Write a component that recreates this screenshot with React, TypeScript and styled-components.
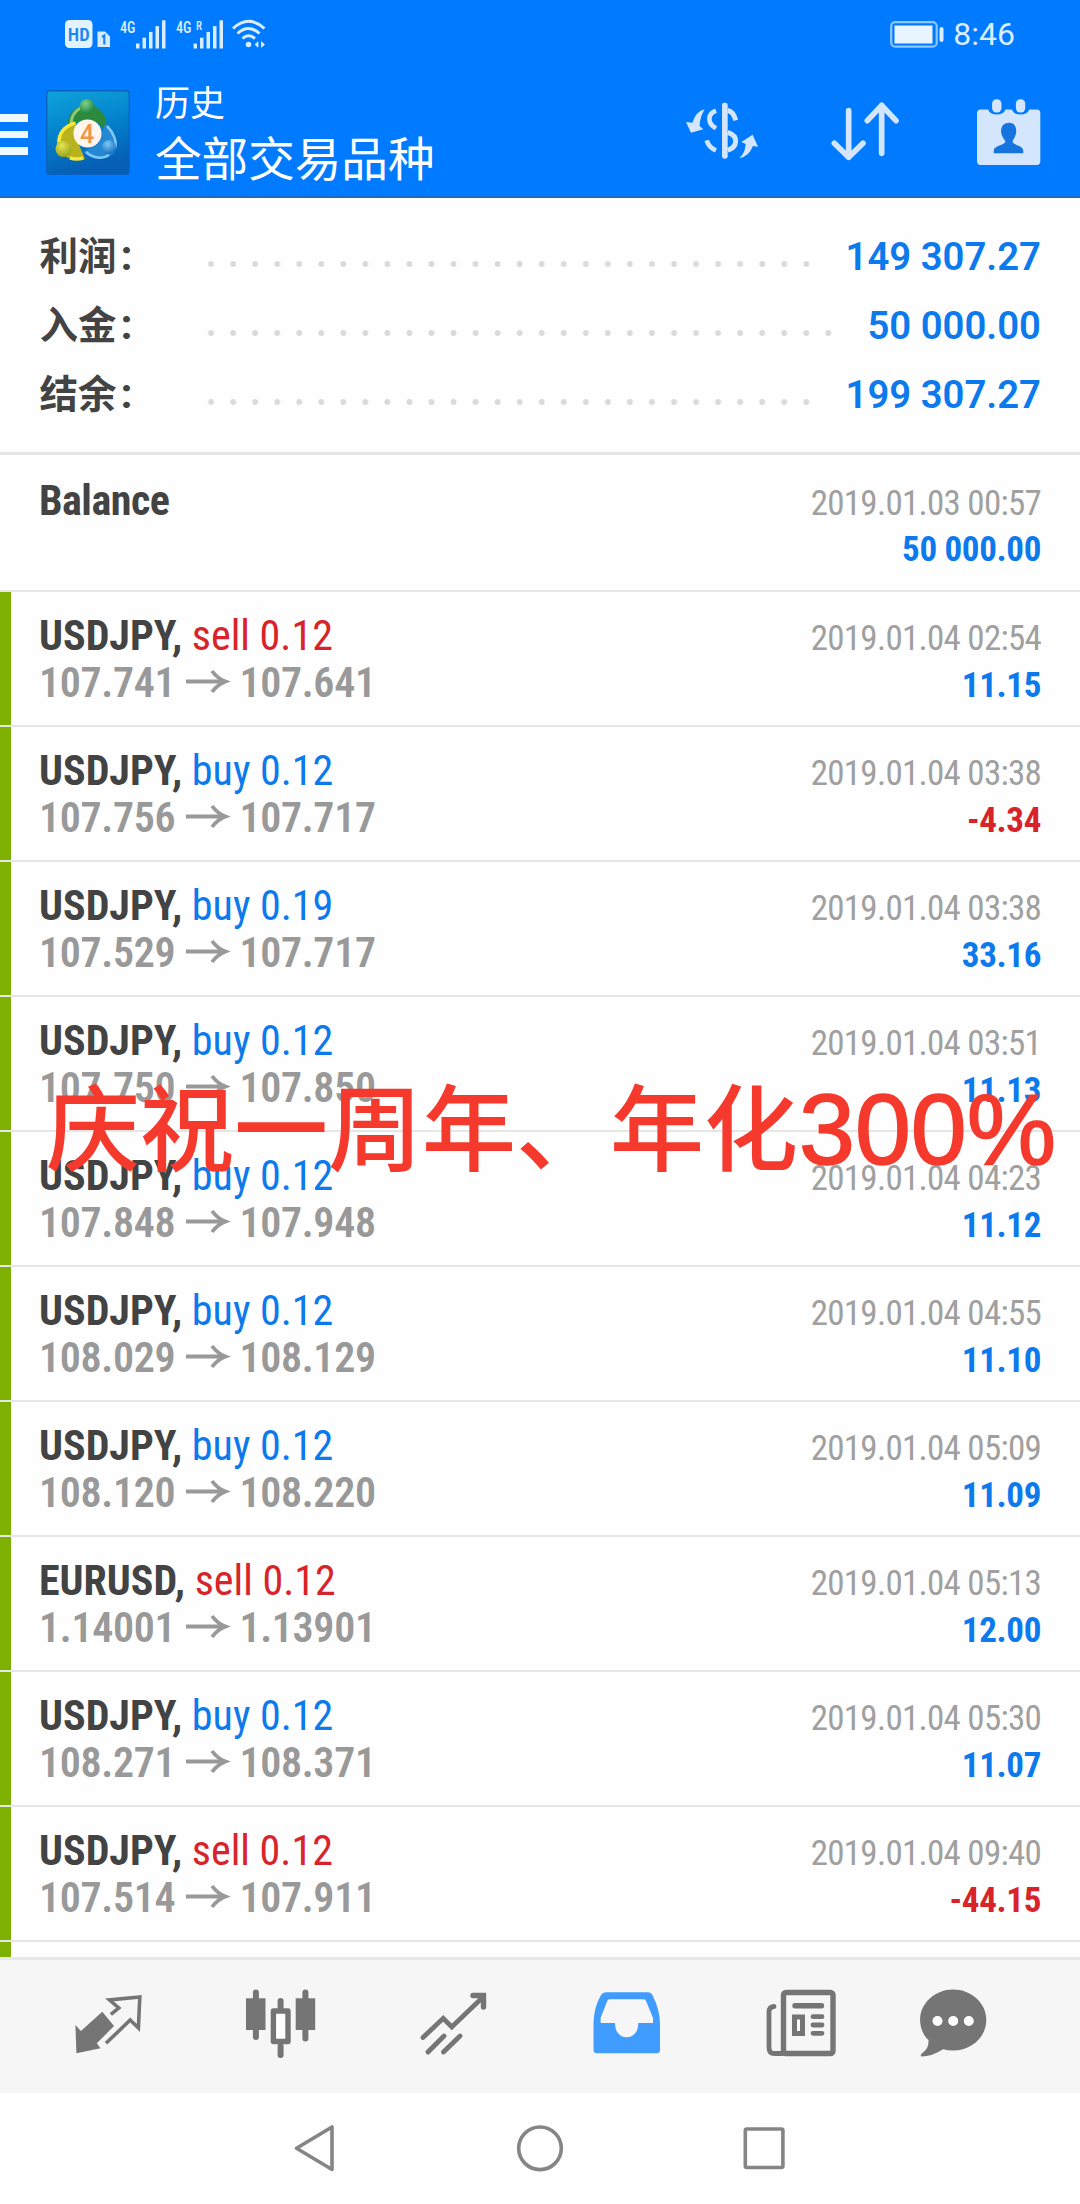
import React from 'react';
import styled, { createGlobalStyle } from 'styled-components';

const BLUE = '#0c7aec';
const RED = '#d8232a';

const Global = createGlobalStyle`
  * { box-sizing: border-box; }
  body { margin: 0; background: #fefefe; }
  svg { display: block; flex: none; overflow: visible; }
`;

const Screen = styled.div`
  position: relative;
  width: 1080px;
  height: 2204px;
  overflow: hidden;
  display: flex;
  flex-direction: column;
  background: #fefefe;
  font-family: Roboto, 'Noto Sans CJK SC', sans-serif;
`;

const Top = styled.header`
  height: 198px;
  flex: none;
  background: #007aff;
  border-bottom: 2px solid #1f6bc4;
  color: #fff;
`;

const StatusBar = styled.div`
  display: flex;
  justify-content: space-between;
  height: 68px;
  padding: 0 65px;
`;

const StatusGroup = styled.div<{ $gap: number }>`
  display: flex;
  align-items: center;
  gap: ${(p) => p.$gap}px;
`;

const Clock = styled.span`
  font-size: 32px;
  line-height: 68px;
  color: #d9edff;
`;

const AppBar = styled.div`
  display: flex;
  align-items: flex-start;
  height: 128px;
`;

const MenuButton = styled.div`
  display: flex;
  flex-direction: column;
  gap: 9px;
  width: 28px;
  padding-top: 46px;
`;

const MenuLine = styled.span`
  height: 7.5px;
  background: #f0f8ff;
`;

const LogoBox = styled.div`
  width: 84px;
  height: 85px;
  margin: 22px 0 0 18px;
`;

const Titles = styled.div`
  display: flex;
  flex-direction: column;
  margin: 9px auto 0 25px;
  font-family: 'Noto Sans CJK SC', sans-serif;
  color: #fff;
`;

const Subtitle = styled.div`
  font-size: 35px;
  line-height: 48px;
`;

const Title = styled.div`
  font-size: 46.6px;
  line-height: 62px;
`;

const Actions = styled.div`
  display: flex;
  align-items: flex-start;
  padding: 32px 38px 0 0;
`;

const Action = styled.div<{ $gap: number; $lift?: number }>`
  margin-left: ${(p) => p.$gap}px;
  margin-top: -${(p) => p.$lift || 0}px;
`;

const Summary = styled.section`
  flex: none;
  height: 257px;
  padding: 24px 39px 0 39.5px;
  border-bottom: 3px solid #e6e6e6;
`;

const SummaryRow = styled.div`
  display: flex;
  align-items: baseline;
  height: 69px;
  line-height: 69px;
  font-size: 38px;
`;

const SummaryLabel = styled.span`
  width: 160.5px;
  font-size: 38.5px;
  font-weight: 700;
  color: #434343;
`;

const Colon = styled.span`
  margin-left: 4px;
  font-size: 43px;
  line-height: 1;
`;

const Dots = styled.span<{ $count: number }>`
  width: ${(p) => p.$count * 22.06}px;
  height: 10px;
  margin-right: auto;
  align-self: flex-start;
  margin-top: 36.5px;
  background: radial-gradient(circle at center, #dadada 2.5px, transparent 3.4px) 0 0 / 22.06px 10px repeat-x;
`;

const SummaryValue = styled.span`
  font-weight: 600;
  font-size: 38.3px;
  color: ${BLUE};
`;

const List = styled.main`
  flex: none;
  height: 1502px;
  overflow: hidden;
  font-family: 'Roboto Condensed', Roboto, sans-serif;
`;

const Row = styled.article<{ $trade?: boolean }>`
  height: ${(p) => (p.$trade ? 135 : 137)}px;
  padding: ${(p) => (p.$trade ? 19.5 : 22)}px 39px 0 ${(p) => (p.$trade ? 28 : 39)}px;
  border-left: ${(p) => (p.$trade ? '11px solid #7db000' : '0 solid')};
`;

const Separated = styled.div`
  border-bottom: 2px solid #e6e6e6;
  & > article { height: 133px; }
  &:first-child > article { height: 135px; }
`;

const Line = styled.div`
  display: flex;
  align-items: baseline;
  justify-content: space-between;
  height: 47px;
  line-height: 47px;
`;

const Symbol = styled.span<{ $tight?: boolean }>`
  font-size: 42px;
  font-weight: 700;
  letter-spacing: ${(p) => (p.$tight ? '-0.5px' : '0')};
  color: #434343;
  white-space: pre;
`;

const Deal = styled.span<{ $sell: boolean }>`
  font-weight: 400;
  color: ${(p) => (p.$sell ? RED : BLUE)};
`;

const Prices = styled.span`
  display: inline-flex;
  align-items: baseline;
  font-size: 42px;
  font-weight: 600;
  letter-spacing: -0.35px;
  color: #999;
`;

const ArrowIcon = styled.svg`
  margin: 0 12.5px 0 10.7px;
  transform: translateY(-4px);
`;

const Time = styled.span`
  font-size: 35px;
  letter-spacing: -0.73px;
  color: #a0a0a0;
`;

const Profit = styled.span<{ $loss?: boolean; $drop?: boolean }>`
  margin-left: auto;
  padding-top: ${(p) => (p.$drop ? 2 : 0)}px;
  font-size: 35px;
  font-weight: 700;
  letter-spacing: -0.35px;
  color: ${(p) => (p.$loss ? RED : BLUE)};
`;

const TabBar = styled.nav`
  display: flex;
  flex: none;
  height: 136px;
  padding-left: 22px;
  border-top: 3px solid #e8e8e8;
  background: #f6f6f6;
  color: #757575;
`;

const NavBar = styled.div`
  display: flex;
  flex: none;
  justify-content: center;
  height: 111px;
  color: #858585;
`;

const Banner = styled.div`
  position: absolute;
  left: 46px;
  top: 1073px;
  font-family: 'Noto Sans CJK SC', sans-serif;
  font-size: 94px;
  font-weight: 500;
  line-height: 100px;
  white-space: nowrap;
  color: #f5392d;
`;

const BannerNumber = styled.span`
  margin-left: 1px;
  font-family: 'Liberation Sans', sans-serif;
  font-size: 100.5px;
  font-weight: 400;
  line-height: 1;
  -webkit-text-stroke: 1.6px #f5392d;
`;

const HdBadge = () => (
  <svg width="45" height="28" viewBox="0 0 45 28">
    <rect width="27.5" height="28" rx="4.5" fill="#e3f2ff" />
    <text x="13.8" y="20.5" textAnchor="middle" fontFamily="Roboto Condensed" fontWeight="600" fontSize="18.5" textLength="22" fill="#1c86f5">HD</text>
    <path d="M32.5 11.5 H40 L45 16.5 V27 H32.5z" fill="#d5ebff" />
    <path d="M37 17 L39.3 15.5 V24.5" fill="none" stroke="#1c86f5" strokeWidth="2.2" />
  </svg>
);

const Signal = ({ roaming }: { roaming?: boolean }) => (
  <svg width="46" height="30" viewBox="0 0 46 30" fill="#d9edff">
    <text x="0" y="13.5" fontFamily="Roboto Condensed" fontWeight="500" fontSize="17" textLength="15.5" lengthAdjust="spacingAndGlyphs">4G</text>
    {roaming && <text x="20" y="10.5" fontFamily="Roboto Condensed" fontWeight="500" fontSize="13" textLength="6" lengthAdjust="spacingAndGlyphs">R</text>}
    {[0, 1, 2, 3, 4].map((i) => (
      <rect key={i} x={(roaming ? 17.5 : 16) + i * 6.5} y={24.5 - i * 5.8} width="3.5" height={5 + i * 5.8} />
    ))}
  </svg>
);

const Wifi = () => (
  <svg width="34" height="30" viewBox="0 0 34 30" fill="none" stroke="#d9edff" strokeWidth="3">
    <path d="M1 9.5 Q16.5 -5 32.5 9.5" />
    <path d="M5.5 14.5 Q16.5 4.5 27.5 14.5" />
    <path d="M10.5 19.5 Q16.5 14 23 19.5" />
    <circle cx="16.5" cy="25.5" r="2.8" fill="#d9edff" stroke="none" />
    <path d="M26 22.8 L23 25.5 L26 28.2z M29.5 22.8 L32.5 25.5 L29.5 28.2z" fill="#d9edff" stroke="#d9edff" strokeWidth="0.8" />
  </svg>
);

const Battery = () => (
  <svg width="55" height="27" viewBox="0 0 55 27">
    <rect x="1.2" y="1.2" width="45.5" height="24.5" rx="4" fill="none" stroke="#8fc5ff" strokeWidth="2.2" />
    <rect x="4.5" y="4.5" width="38" height="18" fill="#e8f4ff" />
    <rect x="49.5" y="6" width="4" height="15" rx="2" fill="#d9edff" />
  </svg>
);

const Logo = () => (
  <svg width="84" height="85" viewBox="0 0 84 85">
    <defs>
      <linearGradient id="tile" x1="0" y1="0" x2="0.25" y2="1">
        <stop offset="0" stopColor="#10a3dc" />
        <stop offset="0.5" stopColor="#0383cd" />
        <stop offset="1" stopColor="#065fb4" />
      </linearGradient>
      <radialGradient id="green" cx="0.4" cy="0.3" r="0.8"><stop offset="0" stopColor="#7fd08a" /><stop offset="1" stopColor="#0e7a35" /></radialGradient>
      <radialGradient id="yellow" cx="0.4" cy="0.3" r="0.8"><stop offset="0" stopColor="#e6e455" /><stop offset="1" stopColor="#8f9d12" /></radialGradient>
      <radialGradient id="azure" cx="0.4" cy="0.3" r="0.8"><stop offset="0" stopColor="#7cc8f7" /><stop offset="1" stopColor="#0a67b8" /></radialGradient>
    </defs>
    <rect x="0.7" y="0.7" width="82.6" height="83.6" rx="3" fill="url(#tile)" stroke="#0b62c0" strokeWidth="1.4" />
    <path d="M22 38 C20 24 30 15 41 15 C53 15 63 26 60 40 L49 31 H34 Z" fill="#2c8a3c" />
    <path d="M25 33 C26 23 33 17 39 17" fill="none" stroke="#8fca7a" strokeWidth="3" />
    <path d="M30 32 C20 34 10 44 11 55 C14 67 27 72 39 69 L31 50 Z" fill="#b9b41d" />
    <path d="M29 33 C19 36 13 43 13 52 M24 68 Q31 70 37 68" fill="none" stroke="#f5e83a" strokeWidth="3.5" />
    <path d="M59 34 C69 42 73 54 68 63 C60 71 46 71 37 62 L52 54 Z" fill="#2389d5" />
    <path d="M61 36 C68 43 71 52 69 58 M40 62 C48 69 57 69 63 65" fill="none" stroke="#83c9f7" strokeWidth="2.5" />
    <circle cx="41" cy="16.5" r="7.5" fill="url(#green)" />
    <circle cx="17.5" cy="59" r="8" fill="url(#yellow)" />
    <circle cx="63" cy="57" r="7" fill="url(#azure)" />
    <circle cx="41.5" cy="43.5" r="14" fill="#fff5ee" />
    <text x="41" y="52.5" textAnchor="middle" fontFamily="Roboto" fontWeight="500" fontSize="25" fill="#f0954a">4</text>
  </svg>
);

const CurrencyIcon = () => (
  <svg width="76" height="62" viewBox="72 60 228 186" fill="#d3e6fd">
    <rect x="186" y="68" width="17" height="168" rx="7" />
    <path d="M168 92 Q147 101 148 118 Q149 134 168 145 M140 181 Q146 202 168 211" fill="none" stroke="#d3e6fd" strokeWidth="14" />
    <path d="M203 91 Q221 95 227 121 M203 157 Q229 166 227 185 Q225 204 203 210" fill="none" stroke="#d3e6fd" strokeWidth="15" />
    <path d="M134 88 Q108 94 97 128 L78 126 L93 158 L130 148 L119 138 Q119 112 134 88z" />
    <path d="M238 235 Q256 218 257 192 L244 186 L278 164 L294 200 L279 198 Q266 230 238 235z" />
  </svg>
);

const SortIcon = () => (
  <svg width="70" height="62" viewBox="510 60 210 186" fill="none" stroke="#d3e6fd" strokeWidth="17" strokeLinecap="round" strokeLinejoin="round">
    <path d="M566 92 V232 M523 190 L566 232 L609 190" />
    <path d="M665 220 V76 M622 122 L665 76 L708 122" />
  </svg>
);

const CalendarIcon = () => (
  <svg width="67" height="69" viewBox="945 52 200 206">
    <path d="M962 86 H984 Q990 101 1010 101 Q1030 101 1036 86 H1055 Q1061 101 1081 101 Q1101 101 1107 86 H1129 Q1140 86 1140 97 V241 Q1140 252 1129 252 H962 Q951 252 951 241 V97 Q951 86 962 86z" fill="#d3e6fd" />
    <rect x="996" y="56" width="28" height="39" rx="13" fill="#d3e6fd" />
    <rect x="1067" y="56" width="28" height="39" rx="13" fill="#d3e6fd" />
    <path d="M1046 126 C1062 126 1069 138 1068 153 C1067 167 1060 174 1057 182 C1058 194 1089 193 1089 209 V217 H1001 V209 C1001 193 1034 194 1036 182 C1032 174 1024 167 1023 153 C1022 138 1030 126 1046 126z" fill="#1574e0" />
  </svg>
);

const Arrow = () => (
  <ArrowIcon width="41" height="23" viewBox="0 0 41 23" fill="none" stroke="#999" strokeWidth="3.8">
    <path d="M0 11.5 H38 M26 1 Q31.5 8.5 39.5 11.5 Q31.5 14.5 26 22" />
  </ArrowIcon>
);

type TabIconProps = { x: number; w: number; children: React.ReactNode };
const TabIcon = ({ x, w, children }: TabIconProps) => (
  <svg width={w} height="132" viewBox={`${x} 1960 ${w} 132`} fill="none" stroke="currentColor" strokeWidth="4.8" strokeLinecap="round">
    {children}
  </svg>
);

type Trade = [symbol: string, deal: string, open: string, close: string, time: string, profit: string];
const trades: Trade[] = [
  ['USDJPY', 'sell 0.12', '107.741', '107.641', '2019.01.04 02:54', '11.15'],
  ['USDJPY', 'buy 0.12', '107.756', '107.717', '2019.01.04 03:38', '-4.34'],
  ['USDJPY', 'buy 0.19', '107.529', '107.717', '2019.01.04 03:38', '33.16'],
  ['USDJPY', 'buy 0.12', '107.750', '107.850', '2019.01.04 03:51', '11.13'],
  ['USDJPY', 'buy 0.12', '107.848', '107.948', '2019.01.04 04:23', '11.12'],
  ['USDJPY', 'buy 0.12', '108.029', '108.129', '2019.01.04 04:55', '11.10'],
  ['USDJPY', 'buy 0.12', '108.120', '108.220', '2019.01.04 05:09', '11.09'],
  ['EURUSD', 'sell 0.12', '1.14001', '1.13901', '2019.01.04 05:13', '12.00'],
  ['USDJPY', 'buy 0.12', '108.271', '108.371', '2019.01.04 05:30', '11.07'],
  ['USDJPY', 'sell 0.12', '107.514', '107.911', '2019.01.04 09:40', '-44.15'],
];

const totals: [string, number, string][] = [
  ['利润', 28, '149 307.27'],
  ['入金', 29, '50 000.00'],
  ['结余', 28, '199 307.27'],
];

export default function App() {
  return (
    <Screen>
      <Global />
      <Top>
        <StatusBar>
          <StatusGroup $gap={10}>
            <HdBadge />
            <Signal />
            <Signal roaming />
            <Wifi />
          </StatusGroup>
          <StatusGroup $gap={8}>
            <Battery />
            <Clock>8:46</Clock>
          </StatusGroup>
        </StatusBar>
        <AppBar>
          <MenuButton><MenuLine /><MenuLine /><MenuLine /></MenuButton>
          <LogoBox><Logo /></LogoBox>
          <Titles>
            <Subtitle>历史</Subtitle>
            <Title>全部交易品种</Title>
          </Titles>
          <Actions>
            <Action $gap={0}><CurrencyIcon /></Action>
            <Action $gap={70}><SortIcon /></Action>
            <Action $gap={75} $lift={2.5}><CalendarIcon /></Action>
          </Actions>
        </AppBar>
      </Top>

      <Summary>
        {totals.map(([label, count, value]) => (
          <SummaryRow key={label}>
            <SummaryLabel>{label}<Colon>:</Colon></SummaryLabel>
            <Dots $count={count} />
            <SummaryValue>{value}</SummaryValue>
          </SummaryRow>
        ))}
      </Summary>

      <List>
        <Separated>
          <Row>
            <Line><Symbol $tight>Balance</Symbol><Time>2019.01.03 00:57</Time></Line>
            <Line><Profit $drop>50 000.00</Profit></Line>
          </Row>
        </Separated>
        {trades.map(([symbol, deal, open, close, time, profit]) => (
          <Separated key={time + open}>
            <Row $trade>
              <Line>
                <Symbol>{symbol}, <Deal $sell={deal.startsWith('sell')}>{deal}</Deal></Symbol>
                <Time>{time}</Time>
              </Line>
              <Line>
                <Prices>{open}<Arrow />{close}</Prices>
                <Profit $loss={profit.startsWith('-')}>{profit}</Profit>
              </Line>
            </Row>
          </Separated>
        ))}
        <Row $trade />
      </List>

      <TabBar>
        <TabIcon x={22} w={173}>
          <path d="M75.4 2025 L80.9 2031 L102.3 2011.7 L114 2026 L96.8 2043.3 L100.5 2048.3 L76.4 2053.3z" fill="currentColor" stroke="none" />
          <path d="M110.9 2014.3 L118.8 2008 L109.5 2000 L139.8 1997 L138.4 2028 L130.2 2020 L106 2043.3" strokeWidth="3.6" strokeLinecap="butt" />
        </TabIcon>
        <TabIcon x={195} w={173}>
          <path d="M255.9 1992.5 V2037 M305.4 1992.5 V2038.5 M280.6 2001 V2008 M280.6 2046 V2055" strokeWidth="6" />
          <rect x="246" y="1998.3" width="19.5" height="31.7" fill="currentColor" stroke="none" />
          <rect x="295.7" y="1998.3" width="19.5" height="31.7" fill="currentColor" stroke="none" />
          <rect x="273.4" y="2011" width="14.6" height="30.5" strokeWidth="5.4" fill="#fff" strokeLinejoin="round" />
        </TabIcon>
        <TabIcon x={368} w={173}>
          <path d="M423 2037.5 L443.2 2018.3 L451.8 2027 L483 1997 M428 2052 L444 2036 M443.5 2052 L460 2036" />
          <path d="M473 1995.5 H483.5 V2007" strokeWidth="5.4" />
        </TabIcon>
        <TabIcon x={541} w={173}>
          <path fillRule="evenodd" stroke="none" fill="#419cff" d="M606 1992.3 H648 Q651 1992.3 652.5 1995.3 Q660 2010 660 2024 V2050 Q660 2053.3 656.7 2053.3 H597 Q593.5 2053.3 593.5 2050 V2024 Q593.5 2008 601 1995 Q602.5 1992.3 606 1992.3z M609.6 1999.3 Q608 1999.3 607 2001.5 L600.6 2018 V2023 H615 C615 2032 620 2037.3 626.6 2037.3 S638.3 2032 638.3 2023 H653 V2018 L646.3 2001.5 Q645.5 1999.3 643.5 1999.3z" />
        </TabIcon>
        <TabIcon x={714} w={173}>
          <rect x="783.5" y="1992.5" width="49.5" height="61" rx="2.5" strokeWidth="5.4" />
          <path d="M774 2006.5 Q769 2007 769 2012 V2048 Q769 2053.5 774.5 2053.5 H783" />
          <path d="M795 2005.7 H821.5" strokeWidth="5.4" />
          <rect x="794.5" y="2017" width="8" height="16.5" strokeWidth="5" fill="#fff" />
          <path d="M813 2016.7 H822 M813 2025 H822 M813 2033.3 H822" />
        </TabIcon>
        <TabIcon x={887} w={132}>
          <path d="M953.2 1989.5 C971.5 1989.5 986.3 2003 986.3 2020 S971.5 2050.5 953.2 2050.5 Q948 2050.5 943 2049.2 Q932 2056.5 921.5 2056.5 Q919.5 2055 923 2052.5 Q929 2048 928.5 2040 C922.5 2034.5 920.1 2027 920.1 2020 C920.1 2003 935 1989.5 953.2 1989.5z" fill="currentColor" stroke="none" />
          <path d="M937.5 2021 h0.01 M953.2 2021 h0.01 M968.8 2021 h0.01" stroke="#fff" strokeWidth="10" />
        </TabIcon>
      </TabBar>

      <NavBar>
        <svg width="540" height="111" viewBox="270 2093 540 111" fill="none" stroke="currentColor" strokeWidth="3.6" strokeLinejoin="round">
          <path d="M296.5 2148.3 L332 2127 V2169.5z" />
          <circle cx="540" cy="2148.3" r="21.3" />
          <rect x="745.3" y="2129" width="37.6" height="38.5" rx="1.5" />
        </svg>
      </NavBar>

      <Banner>庆祝一周年、年化<BannerNumber>300%</BannerNumber></Banner>
    </Screen>
  );
}
